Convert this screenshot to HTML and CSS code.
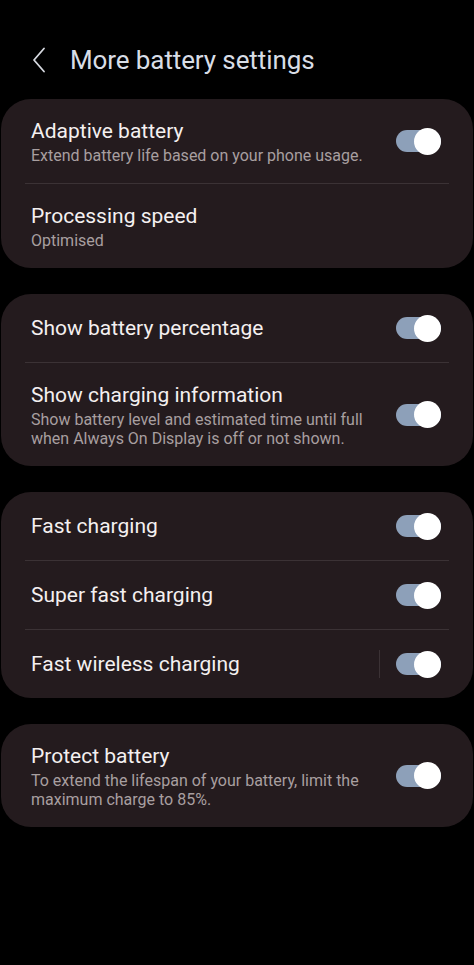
FILE: index.html
```html
<!DOCTYPE html>
<html lang="en">
<head>
    <meta charset="UTF-8">
    <meta name="viewport" content="width=device-width, initial-scale=1.0">
    <title>More battery settings</title>
    <link rel="stylesheet" href="styles.css">
</head>
<body>

<div class="header">
    <svg class="back" width="14" height="26" viewBox="0 0 14 26">
        <path d="M12 1.5 L2 13 L12 24.5" fill="none" stroke="#d6d9e0" stroke-width="1.8" stroke-linecap="round" stroke-linejoin="round"/>
    </svg>
    <h1>More battery settings</h1>
</div>

<div class="card">
    <div class="row">
        <div class="text">
            <div class="title">Adaptive battery</div>
            <div class="sub">Extend battery life based on your phone usage.</div>
        </div>
        <span class="switch"></span>
    </div>
    <div class="divider"></div>
    <div class="row">
        <div class="text">
            <div class="title">Processing speed</div>
            <div class="sub">Optimised</div>
        </div>
    </div>
</div>

<div class="card">
    <div class="row">
        <div class="text">
            <div class="title">Show battery percentage</div>
        </div>
        <span class="switch"></span>
    </div>
    <div class="divider"></div>
    <div class="row">
        <div class="text">
            <div class="title">Show charging information</div>
            <div class="sub">Show battery level and estimated time until full<br>when Always On Display is off or not shown.</div>
        </div>
        <span class="switch"></span>
    </div>
</div>

<div class="card">
    <div class="row">
        <div class="text">
            <div class="title">Fast charging</div>
        </div>
        <span class="switch"></span>
    </div>
    <div class="divider"></div>
    <div class="row">
        <div class="text">
            <div class="title">Super fast charging</div>
        </div>
        <span class="switch"></span>
    </div>
    <div class="divider"></div>
    <div class="row">
        <div class="text">
            <div class="title">Fast wireless charging</div>
        </div>
        <span class="vline"></span>
        <span class="switch"></span>
    </div>
</div>

<div class="card">
    <div class="row">
        <div class="text">
            <div class="title">Protect battery</div>
            <div class="sub">To extend the lifespan of your battery, limit the<br>maximum charge to 85%.</div>
        </div>
        <span class="switch"></span>
    </div>
</div>

</body>
</html>
```

FILE: styles.css
```css
body {
    margin: 0;
    background: #000;
    font-family: Roboto, "Noto Sans", sans-serif;
    color: #f2eeee;
}
.header {
    display: flex;
    align-items: center;
    height: 78px;
    padding: 21px 0 0 32px;
}
.header .back {
    display: block;
}
.header h1 {
    margin: 0 0 0 24px;
    font-size: 26px;
    font-weight: 400;
    color: #d8dde6;
    letter-spacing: -0.1px;
}
.card {
    margin: 26px 1px 0;
    background: #241b1e;
    border-radius: 30px;
}
.header + .card {
    margin-top: 0;
}
.row {
    display: flex;
    align-items: center;
    box-sizing: border-box;
    min-height: 68px;
    padding: 18px 32px 18px 30px;
}
.text {
    flex: 1;
}
.title {
    font-size: 21px;
    line-height: 28px;
    color: #f4f0f0;
}
.sub {
    margin-top: 1px;
    font-size: 16px;
    line-height: 19px;
    color: #a89fa0;
}
.divider {
    height: 1px;
    margin: 0 24px;
    background: #3b3235;
}
.vline {
    width: 1px;
    height: 28px;
    margin-right: 16px;
    background: #3b3235;
}
.switch {
    position: relative;
    flex: none;
    width: 45px;
    height: 22px;
    border-radius: 11px;
    background: #8da0b9;
}
.switch::after {
    content: "";
    position: absolute;
    right: 0;
    top: -2.5px;
    width: 27px;
    height: 27px;
    border-radius: 50%;
    background: #fff;
}
```
